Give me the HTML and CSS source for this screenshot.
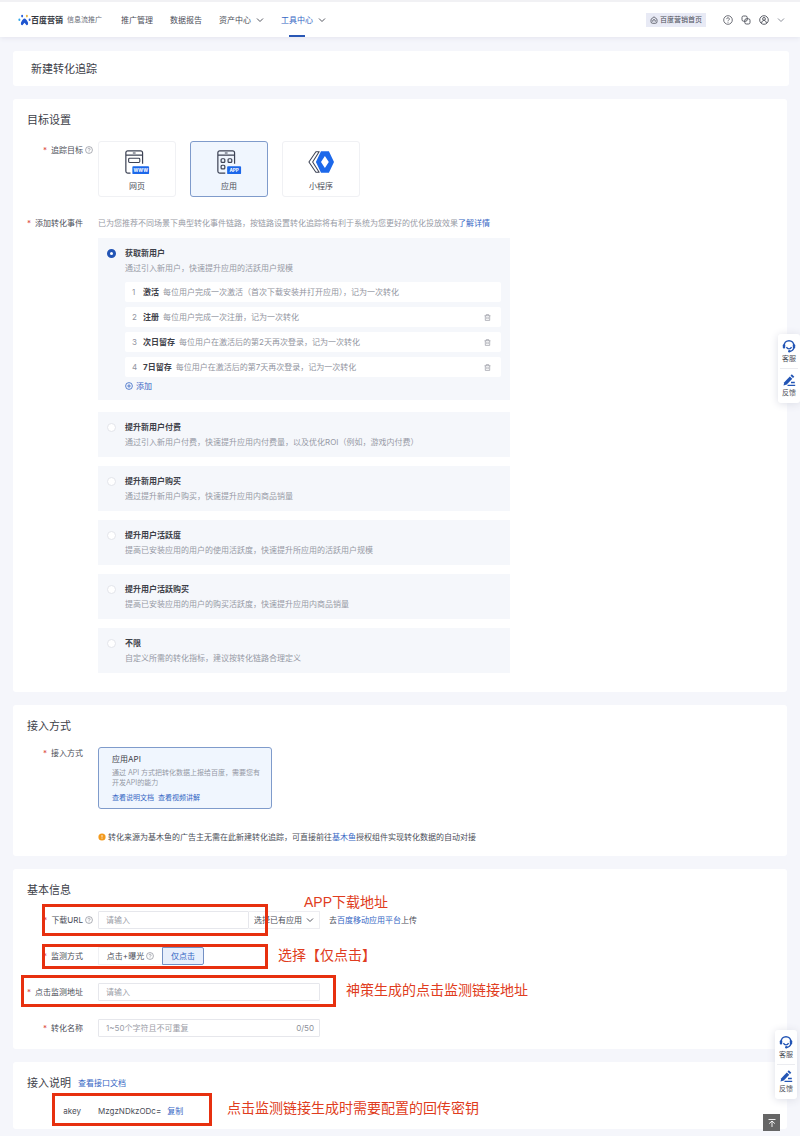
FILE: index.html
```html
<!DOCTYPE html>
<html lang="zh-CN">
<head>
<meta charset="utf-8">
<meta name="viewport" content="width=device-width, initial-scale=1">
<title>新建转化追踪</title>
<link rel="stylesheet" href="styles.css">
</head>
<body>
<svg class="sprite" aria-hidden="true">
  <symbol id="chevron" viewBox="0 0 8 8"><path d="M1 2.5 4 5.5 7 2.5" fill="none" stroke="currentColor"/></symbol>
  <symbol id="help" viewBox="0 0 10 10"><circle cx="5" cy="5" r="4.3" fill="none" stroke="currentColor" stroke-width=".8"/><path d="M3.7 4.1a1.3 1.3 0 1 1 1.9 1.1q-.6.3-.6 1M5 6.9v.8" fill="none" stroke="currentColor" stroke-width=".8"/></symbol>
  <symbol id="trash" viewBox="0 0 8 8"><path d="M.6 2h6.8M2.6 1.8V.7h2.8v1.1M1.5 2v5.3h5V2M3.2 3.5v2.3M4.8 3.5v2.3" fill="none" stroke="currentColor" stroke-width=".7"/></symbol>
  <symbol id="headset" viewBox="0 0 14 14"><path d="M2.200 6.500a4.800 4.800 0 0 1 9.600 0" fill="none" stroke="currentColor" stroke-width="1.500"/><rect x=".8" y="5.300" width="2.400" height="4.200" rx="1" fill="currentColor"/><rect x="10.800" y="5.300" width="2.400" height="4.200" rx="1" fill="currentColor"/><path d="M4.500 8a2.600 2.600 0 0 0 5 0M11.900 9A5 5 0 0 1 8 12.400" fill="none" stroke="currentColor" stroke-width="1.200"/><circle cx="7.300" cy="12.300" r="1.200" fill="currentColor"/></symbol>
  <symbol id="pencil" viewBox="0 0 14 14"><path d="M1.500 12.600 2.300 9.200 7.800 3.400 10.300 5.800 4.800 11.600Z" fill="currentColor"/><path d="M8.500 2.700 9.800 1.300 12.300 3.700 11 5.100Z" fill="currentColor"/><path d="M9 9.500H12.800M5.500 12.400H13.200" stroke="currentColor" stroke-width="1.300"/></symbol>
</svg>

<header class="topbar">
  <a class="brand" href="#">
    <svg class="brand-mark" viewBox="0 0 13 12" aria-hidden="true">
      <path d="M6.500 4.500C7.700 4.500 8.500 6 9.500 7.400 10.600 9 10.200 11.200 8.600 11.200L6.500 8.800 4.400 11.200C2.800 11.200 2.400 9 3.500 7.400 4.500 6 5.300 4.500 6.500 4.500Z" fill="#1f55cf"/>
      <ellipse cx="1.400" cy="5.700" rx="1" ry="1.300" fill="#35a8ea"/>
      <ellipse cx="4.100" cy="2.100" rx="1" ry="1.300" fill="#2b62da"/>
      <ellipse cx="8.900" cy="2.100" rx="1" ry="1.300" fill="#e6b645"/>
      <ellipse cx="11.600" cy="5.700" rx="1" ry="1.300" fill="#2b62da"/>
    </svg>
    <strong class="brand-name">百度营销</strong><span class="brand-sub">信息流推广</span>
  </a>
  <nav class="nav">
    <a class="nav-item" href="#">推广管理</a>
    <a class="nav-item" href="#">数据报告</a>
    <a class="nav-item" href="#">资产中心<svg class="chevron"><use href="#chevron"/></svg></a>
    <a class="nav-item nav-active" href="#" aria-current="page">工具中心<svg class="chevron"><use href="#chevron"/></svg></a>
  </nav>
  <a class="home-link" href="#">
    <svg class="home-icon" viewBox="0 0 8 8" aria-hidden="true"><path d="M1 3.300 4 .8l3 2.500v2.400Q7 7.300 5.400 7.300H2.600Q1 7.300 1 5.700ZM2.700 5.700V4.900a1.300 1.300 0 0 1 2.600 0v.8" fill="none" stroke="currentColor" stroke-width=".8"/></svg>百度营销首页</a>
  <div class="tools">
    <button class="icon-btn" aria-label="帮助"><svg class="tool-icon"><use href="#help"/></svg></button>
    <button class="icon-btn" aria-label="切换"><svg class="tool-icon" viewBox="0 0 10 10"><rect x="1" y="1" width="5.200" height="5.200" rx="1.500" fill="none" stroke="currentColor" stroke-width=".9"/><rect x="3.800" y="3.800" width="5.200" height="5.200" rx="1.500" fill="none" stroke="currentColor" stroke-width=".9"/></svg></button>
    <button class="icon-btn" aria-label="账户"><svg class="tool-icon" viewBox="0 0 10 10"><circle cx="5" cy="5" r="4.300" fill="none" stroke="currentColor" stroke-width=".9"/><circle cx="5" cy="3.900" r="1.400" fill="none" stroke="currentColor" stroke-width=".9"/><path d="M2.600 8c.3-3.400 4.500-3.400 4.800 0" fill="none" stroke="currentColor" stroke-width=".9"/></svg></button>
    <button class="icon-btn icon-btn-light" aria-label="展开"><svg class="chevron-sm"><use href="#chevron"/></svg></button>
  </div>
</header>

<main class="page">
  <div class="title-card"><h1 class="heading">新建转化追踪</h1></div>

  <section class="card card-goal">
    <h2 class="heading">目标设置</h2>
    <div class="row">
      <div class="label label-mid"><span class="req">*</span>追踪目标<span class="slot"><svg class="help"><use href="#help"/></svg></span></div>
      <div class="tiles">
        <button class="tile" aria-pressed="false">
          <svg class="tile-icon" viewBox="0 0 28 28" aria-hidden="true"><path d="M20 16V4a2 2 0 0 0-2-2H4a2 2 0 0 0-2 2v20a2 2 0 0 0 2 2h3M2 6.500h18M9.500 4.300h3" fill="none" stroke="#3c4254" stroke-width="1.300"/><rect x="5" y="10" width="12" height="4.500" rx="1" fill="none" stroke="#3c4254" stroke-width="1.200"/><rect x="9" y="18.500" width="18" height="8.500" rx="1" fill="#1c68ea"/><text class="badge-text" x="18" y="24.600" text-anchor="middle">WWW</text></svg>
          <span>网页</span>
        </button>
        <button class="tile tile-on" aria-pressed="true">
          <svg class="tile-icon" viewBox="0 0 28 28" aria-hidden="true"><path d="M20 16V4a2 2 0 0 0-2-2H4a2 2 0 0 0-2 2v20a2 2 0 0 0 2 2h6M2 6.500h18M9.500 4.300h3" fill="none" stroke="#3c4254" stroke-width="1.300"/><g fill="none" stroke="#3c4254" stroke-width="1.300"><rect x="5.500" y="10.500" width="4" height="4" rx="1"/><rect x="13" y="10.500" width="4" height="4" rx="1"/><rect x="5.500" y="17.500" width="4" height="4" rx="1"/></g><rect x="12" y="18.500" width="15" height="8.500" rx="1" fill="#1c68ea"/><text class="badge-text" x="19.500" y="24.600" text-anchor="middle">APP</text></svg>
          <span>应用</span>
        </button>
        <button class="tile" aria-pressed="false">
          <svg class="tile-icon" viewBox="0 0 28 28" aria-hidden="true"><path d="M12 3H8.500L1 14l7.500 11H12L5 14Z" fill="#fff" stroke="#3c4254" stroke-width="1.100" stroke-linejoin="round"/><path fill-rule="evenodd" d="M14 2.500h8.500L28 14l-5.500 11.500H14L8.500 14ZM18.200 7.500 14 14 18.200 20.500 22.400 14Z" fill="#1c68ea"/></svg>
          <span>小程序</span>
        </button>
      </div>
    </div>
    <div class="row row-events">
      <div class="label"><span class="req">*</span>添加转化事件<span class="slot"></span></div>
      <div class="events">
        <p class="hint">已为您推荐不同场景下典型转化事件链路，按链路设置转化追踪将有利于系统为您更好的优化投放效果<a class="link" href="#">了解详情</a></p>
        <div class="panel panel-open">
          <input class="radio" type="radio" name="goal" id="g1" checked>
          <div class="panel-body">
            <label class="panel-title" for="g1">获取新用户</label>
            <p class="panel-desc">通过引入新用户，快速提升应用的活跃用户规模</p>
            <ol class="steps">
              <li class="step"><span class="num">1</span><b class="step-name">激活</b><span>每位用户完成一次激活（首次下载安装并打开应用），记为一次转化</span></li>
              <li class="step"><span class="num">2</span><b class="step-name">注册</b><span>每位用户完成一次注册，记为一次转化</span><button class="trash-btn" aria-label="删除注册"><svg class="trash"><use href="#trash"/></svg></button></li>
              <li class="step"><span class="num">3</span><b class="step-name">次日留存</b><span>每位用户在激活后的第2天再次登录，记为一次转化</span><button class="trash-btn" aria-label="删除次日留存"><svg class="trash"><use href="#trash"/></svg></button></li>
              <li class="step"><span class="num">4</span><b class="step-name">7日留存</b><span>每位用户在激活后的第7天再次登录，记为一次转化</span><button class="trash-btn" aria-label="删除7日留存"><svg class="trash"><use href="#trash"/></svg></button></li>
            </ol>
            <button class="add"><svg class="add-icon" viewBox="0 0 8 8" aria-hidden="true"><circle cx="4" cy="4" r="3.400" fill="none" stroke="currentColor" stroke-width=".8"/><path d="M4 2.200v3.600M2.200 4h3.600" stroke="currentColor" stroke-width=".8"/></svg>添加</button>
          </div>
        </div>
        <div class="panel">
          <input class="radio" type="radio" name="goal" id="g2">
          <div class="panel-body"><label class="panel-title" for="g2">提升新用户付费</label><p class="panel-desc">通过引入新用户付费，快速提升应用内付费量，以及优化ROI（例如，游戏内付费）</p></div>
        </div>
        <div class="panel">
          <input class="radio" type="radio" name="goal" id="g3">
          <div class="panel-body"><label class="panel-title" for="g3">提升新用户购买</label><p class="panel-desc">通过提升新用户购买，快速提升应用内商品销量</p></div>
        </div>
        <div class="panel">
          <input class="radio" type="radio" name="goal" id="g4">
          <div class="panel-body"><label class="panel-title" for="g4">提升用户活跃度</label><p class="panel-desc">提高已安装应用的用户的使用活跃度，快速提升所应用的活跃用户规模</p></div>
        </div>
        <div class="panel">
          <input class="radio" type="radio" name="goal" id="g5">
          <div class="panel-body"><label class="panel-title" for="g5">提升用户活跃购买</label><p class="panel-desc">提高已安装应用的用户的购买活跃度，快速提升应用内商品销量</p></div>
        </div>
        <div class="panel">
          <input class="radio" type="radio" name="goal" id="g6">
          <div class="panel-body"><label class="panel-title" for="g6">不限</label><p class="panel-desc">自定义所需的转化指标，建议按转化链路合理定义</p></div>
        </div>
      </div>
    </div>
  </section>

  <section class="card card-access">
    <h2 class="heading">接入方式</h2>
    <div class="row">
      <div class="label"><span class="req">*</span>接入方式<span class="slot"></span></div>
      <div>
        <div class="api">
          <h3 class="api-title">应用API</h3>
          <p class="api-desc">通过 API 方式把转化数据上报给百度，需要您有开发API的能力</p>
          <p class="api-links"><a class="link" href="#">查看说明文档</a><a class="link" href="#">查看视频讲解</a></p>
        </div>
        <p class="notice"><svg class="notice-icon" viewBox="0 0 8 8" aria-hidden="true"><circle cx="4" cy="4" r="3.600" fill="#f39a1d"/><path d="M4 2v2.500M4 5.300v.8" stroke="#fff" stroke-width=".8"/></svg>转化来源为基木鱼的广告主无需在此新建转化追踪，可直接前往<a class="link" href="#">基木鱼</a>授权组件实现转化数据的自动对接</p>
      </div>
    </div>
  </section>

  <section class="card">
    <h2 class="heading">基本信息</h2>
    <div class="fields">
      <div class="row">
        <label class="label label-mid" for="url"><span class="req">*</span>下载URL<span class="slot"><svg class="help"><use href="#help"/></svg></span></label>
        <div class="inline">
          <div class="combo">
            <input class="input" id="url" type="text" placeholder="请输入">
            <div class="select-wrap"><select class="select" aria-label="选择已有应用"><option>选择已有应用</option></select><svg class="chevron select-chevron"><use href="#chevron"/></svg></div>
          </div>
          <p class="upload">去<a class="link" href="#">百度移动应用平台</a>上传</p>
        </div>
        <div class="mark mark-url"></div><div class="note note-url">APP下载地址</div>
      </div>
      <div class="row">
        <div class="label label-mid"><span class="req">*</span>监测方式<span class="slot"></span></div>
        <div class="inline">
          <button class="seg seg-wide" aria-pressed="false">点击+曝光<svg class="help"><use href="#help"/></svg></button><button class="seg seg-on" aria-pressed="true">仅点击</button>
        </div>
        <div class="mark mark-mode"></div><div class="note note-mode">选择【仅点击】</div>
      </div>
      <div class="row">
        <label class="label label-mid" for="monitor"><span class="req">*</span>点击监测地址<span class="slot"></span></label>
        <div class="field"><input class="input" id="monitor" type="text" placeholder="请输入"></div>
        <div class="mark mark-monitor"></div><div class="note note-monitor">神策生成的点击监测链接地址</div>
      </div>
      <div class="row">
        <label class="label label-mid" for="name"><span class="req">*</span>转化名称<span class="slot"></span></label>
        <div class="field"><input class="input" id="name" type="text" placeholder="1~50个字符且不可重复"><span class="count">0/50</span></div>
      </div>
    </div>
  </section>

  <section class="card">
    <div class="doc-head"><h2 class="heading">接入说明</h2><a class="link" href="#">查看接口文档</a></div>
    <div class="row">
      <div class="label">akey<span class="slot slot-key"></span></div>
      <div class="inline key"><span>MzgzNDkzODc=</span><button class="copy">复制</button></div>
      <div class="mark mark-key"></div><div class="note note-key">点击监测链接生成时需要配置的回传密钥</div>
    </div>
  </section>
</main>

<aside class="float float-top">
  <a class="float-item" href="#"><svg class="float-icon"><use href="#headset"/></svg>客服</a>
  <a class="float-item" href="#"><svg class="float-icon"><use href="#pencil"/></svg>反馈</a>
</aside>
<aside class="float float-bottom">
  <a class="float-item" href="#"><svg class="float-icon"><use href="#headset"/></svg>客服</a>
  <a class="float-item" href="#"><svg class="float-icon"><use href="#pencil"/></svg>反馈</a>
</aside>
<button class="to-top" aria-label="回到顶部"><svg class="to-top-icon" viewBox="0 0 10 10"><path d="M1.500 1.500h7M5 9V3M2.200 5.600 5 3l2.800 2.600" fill="none" stroke="#fff" stroke-width=".9"/></svg></button>
</body>
</html>
```

FILE: styles.css
```css
* { box-sizing: border-box; }
body {
  margin: 0;
  position: relative;
  border-top: 2px solid #f1f1f4;
  background: #f5f6fb;
  color: #4b4e58;
  font: 8px/12px Inter, "Noto Sans CJK SC", sans-serif;
}
h1, h2, h3, p, ol { margin: 0; padding: 0; font-weight: 400; }
button, input, select { font: inherit; color: inherit; margin: 0; }
button { padding: 0; border: 0; background: none; cursor: pointer; }
a { color: inherit; text-decoration: none; }
svg { display: block; flex: none; }
.sprite { position: absolute; width: 0; height: 0; }
.link { color: #3566c4; }

.topbar {
  display: flex;
  align-items: center;
  height: 35px;
  padding: 0 15px 0 18px;
  background: #fff;
  box-shadow: 0 1px 5px #e3e4ee;
}
.brand { display: flex; align-items: center; }
.brand-mark { width: 13px; height: 12px; }
.brand-name { color: #30333b; font-weight: 700; }
.brand-sub { margin-left: 4px; font-size: 7px; color: #666973; }
.nav { display: flex; flex: 1; align-self: stretch; gap: 17px; margin-left: 19px; }
.nav-item { position: relative; display: flex; align-items: center; gap: 5px; }
.nav-active { color: #3566c4; }
.nav-active::after {
  content: "";
  position: absolute;
  left: 8px;
  bottom: 0;
  width: 16px;
  height: 2px;
  background: #2957b5;
}
.chevron { width: 8px; height: 8px; color: #555862; }
.chevron-sm { width: 8px; height: 8px; }
.home-link {
  display: flex;
  align-items: center;
  gap: 2px;
  height: 14px;
  padding: 0 4px;
  background: #e8eaf5;
  font-size: 7px;
}
.home-icon { width: 8px; height: 8px; }
.tools { display: flex; gap: 8px; margin-left: 17px; }
.icon-btn { color: #4b4e58; }
.icon-btn-light { color: #8d909a; }
.tool-icon { width: 10px; height: 10px; }

.page { display: flex; flex-direction: column; gap: 13px; padding: 14px 11px 6px 13px; }
.title-card { padding: 10px 18px 9px; border-radius: 3px; background: #fff; }
.heading { font-size: 11px; line-height: 16px; color: #3d4048; }
.card { margin-right: 2px; padding: 13px 14px 12px 0; border-radius: 3px; background: #fff; }
.card-goal { padding-bottom: 19px; }
.card-access { padding-bottom: 13px; }
.card > .heading { margin: 0 0 13px 14px; }
.row { position: relative; display: grid; grid-template-columns: 85px 1fr; }
.row-events { margin-top: 20px; }
.label { display: flex; justify-content: flex-end; white-space: nowrap; }
.label-mid { padding-top: 3px; }
.req { margin-right: 4px; color: #dc4a42; }
.slot { display: flex; align-items: center; width: 15px; height: 12px; padding-left: 2px; }
.slot-key { width: 17px; }
.help { width: 8px; height: 8px; color: #80838d; }

.tiles { display: flex; gap: 14px; }
.tile {
  display: flex;
  flex-direction: column;
  align-items: center;
  gap: 5px;
  width: 78px;
  height: 56px;
  padding-top: 7px;
  border: 1px solid #f0f1f4;
  border-radius: 3px;
  background: #fff;
}
.tile-on { border-color: #7f9bcb; background: #f0f6fe; }
.tile-icon { width: 26px; height: 26px; }
.badge-text { font: 700 5px Inter, sans-serif; fill: #fff; }

.events { display: flex; flex-direction: column; gap: 9px; max-width: 412px; }
.hint { color: #989ba6; white-space: nowrap; }
.panel { display: flex; gap: 9px; padding: 9px; background: #f5f7fb; }
.panel-open { margin-bottom: 3px; padding-bottom: 8px; }
.radio {
  appearance: none;
  flex: none;
  width: 9px;
  height: 9px;
  margin-top: 2px;
  border: 1px solid #e3e5eb;
  border-radius: 50%;
  background: #fff;
}
.radio:checked { border: 3px solid #2355b5; }
.panel-body { flex: 1; }
.panel-title { display: block; font-weight: 700; color: #3d4048; }
.panel-desc { margin-top: 3px; color: #9599a5; }
.steps { display: flex; flex-direction: column; gap: 5px; margin-top: 8px; list-style: none; }
.step {
  display: flex;
  align-items: center;
  height: 20px;
  padding: 0 10px 0 7px;
  border-radius: 2px;
  background: #fff;
  color: #9194a0;
}
.num { width: 11px; }
.step-name { margin-right: 4px; color: #3d4048; font-weight: 700; }
.trash-btn { margin-left: auto; color: #888b96; }
.trash { width: 7px; height: 7px; }
.add { display: flex; align-items: center; gap: 3px; margin-top: 3px; color: #3566c4; }
.add-icon { width: 8px; height: 8px; }

.api {
  width: 174px;
  height: 62px;
  padding: 5px 9px 5px 13px;
  border: 1px solid #7f9bcb;
  border-radius: 3px;
  background: #f0f6fe;
}
.api-title { font-size: 8px; color: #3d4048; }
.api-desc { margin-top: 3px; font-size: 7px; line-height: 10px; color: #9599a5; }
.api-links { display: flex; gap: 4px; margin-top: 4px; font-size: 7px; }
.notice { display: flex; align-items: center; margin-top: 22px; white-space: nowrap; }
.notice-icon { width: 8px; height: 8px; margin-right: 2px; }

.fields { display: flex; flex-direction: column; gap: 18px; }
.inline { display: flex; align-items: center; }
.combo { display: flex; width: 222px; }
.field { position: relative; width: 222px; }
.input {
  display: block;
  width: 100%;
  min-width: 0;
  height: 18px;
  padding: 0 7px;
  border: 1px solid #e6e7ec;
  border-radius: 1px;
  background: #fff;
}
.input::placeholder { color: #9a9da7; opacity: 1; }
.count { position: absolute; top: 3px; right: 6px; color: #8d909a; }
.select-wrap { position: relative; flex: none; width: 71px; }
.select {
  appearance: none;
  width: 100%;
  height: 18px;
  padding: 0 5px;
  border: 1px solid #ededf1;
  border-left: 0;
  background: #fff;
}
.select-chevron { position: absolute; top: 5px; right: 6px; pointer-events: none; }
.upload { margin-left: 9px; }
.seg {
  display: flex;
  align-items: center;
  justify-content: center;
  gap: 2px;
  width: 42px;
  height: 18px;
  border: 1px solid #f0f1f4;
}
.seg-wide { width: 64px; border-right: 0; }
.seg-on { border-color: #7390c4; border-radius: 0 2px 2px 0; background: #e7effc; color: #3566c4; }
.doc-head { display: flex; align-items: center; gap: 7px; margin: 0 0 14px 14px; }
.key { gap: 6px; }
.copy { color: #3566c4; }

.mark { position: absolute; border: 3px solid #e7300f; pointer-events: none; }
.mark-url { left: 29px; top: -7px; width: 226px; height: 32px; }
.mark-mode { left: 29px; top: -3px; width: 226px; height: 25px; }
.mark-monitor { left: 8px; top: -8px; width: 315px; height: 32px; }
.mark-key { left: 39px; top: -12px; width: 160px; height: 33px; }
.note {
  position: absolute;
  color: #e03c20;
  font: 14px/20px "Liberation Sans", "Noto Sans CJK SC", sans-serif;
  white-space: nowrap;
}
.note-url { left: 291px; top: -19px; }
.note-mode { left: 265px; top: -2px; }
.note-monitor { left: 333px; top: -3px; }
.note-key { left: 214px; top: -7px; }

.float {
  position: absolute;
  width: 22px;
  padding: 1px 2px;
  border-radius: 3px;
  background: #fff;
  box-shadow: 0 1px 8px #dcdde6;
  font-size: 7px;
}
.float-top { top: 332px; right: 0; }
.float-bottom { top: 1028px; right: 3px; }
.float-item { display: flex; flex-direction: column; align-items: center; padding: 4px 0 3px; }
.float-item + .float-item { border-top: 1px solid #ebecf0; }
.float-icon { width: 14px; height: 14px; color: #2355b5; }
.to-top {
  position: absolute;
  top: 1112px;
  right: 20px;
  display: grid;
  place-items: center;
  width: 17px;
  height: 17px;
  background: #666;
}
.to-top-icon { width: 10px; height: 10px; }
```
